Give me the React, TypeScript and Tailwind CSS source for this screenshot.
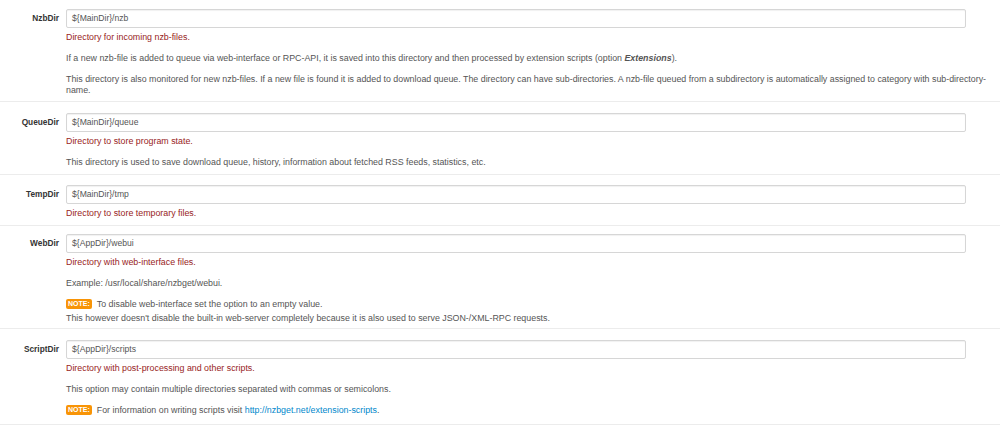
import React from 'react';

interface OptionRowProps {
  name: string;
  value: string;
  caption: string;
  children?: React.ReactNode;
  pad: string;
}

const Note: React.FC = () => (
  <span className="mr-[5px] inline-block h-[10px] rounded-[2px] bg-[#f89406] px-[2px] align-top text-[7px] font-bold leading-[10px] text-white">
    NOTE:
  </span>
);

const OptionRow: React.FC<OptionRowProps> = ({ name, value, caption, children, pad }) => {
  return (
    <div className={`flex border-t border-[#ececec] ${pad}`}>
      <label className="w-[59px] shrink-0 pt-[4px] text-right text-[8.3px] font-bold leading-[11px] text-[#333]">{name}</label>
      <div className="ml-[7px] w-[926px]">
        <div className="flex h-[19px] w-[900px] items-center rounded-[2px] border border-[#d6d6d6] bg-white px-[5px] text-[8.6px] text-[#555] shadow-[inset_0_1px_1px_rgba(0,0,0,0.06)]">
          {value}
        </div>
        <p className="mt-[4px] text-[8.85px] leading-[11px] text-[#982424]">{caption}</p>
        {children}
      </div>
    </div>
  );
};

const Desc: React.FC<{ children: React.ReactNode }> = ({ children }) => (
  <div className="mt-[10px] text-[8.85px] leading-[11px] text-[#555]">{children}</div>
);

export default function App() {
  return (
    <div className="-mt-[1px] h-[427px] w-[1000px] overflow-hidden bg-white font-['Liberation_Sans',Arial,sans-serif]">
      <OptionRow pad="pt-[9px] pb-[5px] border-white" name="NzbDir" value="${MainDir}/nzb" caption="Directory for incoming nzb-files.">
        <Desc>
          If a new nzb-file is added to queue via web-interface or RPC-API, it is saved into this directory and then
          processed by extension scripts (option <b><i>Extensions</i></b>).
        </Desc>
        <Desc>
          This directory is also monitored for new nzb-files. If a new file is found it is added to download queue. The
          directory can have sub-directories. A nzb-file queued from a subdirectory is automatically assigned to category
          with sub-directory-name.
        </Desc>
      </OptionRow>
      <OptionRow pad="pt-[11px] pb-[6px]" name="QueueDir" value="${MainDir}/queue" caption="Directory to store program state.">
        <Desc>This directory is used to save download queue, history, information about fetched RSS feeds, statistics, etc.</Desc>
      </OptionRow>
      <OptionRow pad="pt-[10px] pb-[6px]" name="TempDir" value="${MainDir}/tmp" caption="Directory to store temporary files." />
      <OptionRow pad="pt-[8px] pb-[4px]" name="WebDir" value="${AppDir}/webui" caption="Directory with web-interface files.">
        <Desc>Example: /usr/local/share/nzbget/webui.</Desc>
        <Desc>
          <div>
            <Note />
            To disable web-interface set the option to an empty value.
          </div>
          <div className="mt-[3px]">
            This however doesn't disable the built-in web-server completely because it is also used to serve
            JSON-/XML-RPC requests.
          </div>
        </Desc>
      </OptionRow>
      <OptionRow pad="pt-[11px] pb-[8px]" name="ScriptDir" value="${AppDir}/scripts" caption="Directory with post-processing and other scripts.">
        <Desc>This option may contain multiple directories separated with commas or semicolons.</Desc>
        <Desc>
          <Note />
          For information on writing scripts visit{' '}
          <a className="text-[#0088cc]" href="#">
            http://nzbget.net/extension-scripts
          </a>
          .
        </Desc>
      </OptionRow>
      <div className="border-t border-[#ececec]" />
    </div>
  );
}
